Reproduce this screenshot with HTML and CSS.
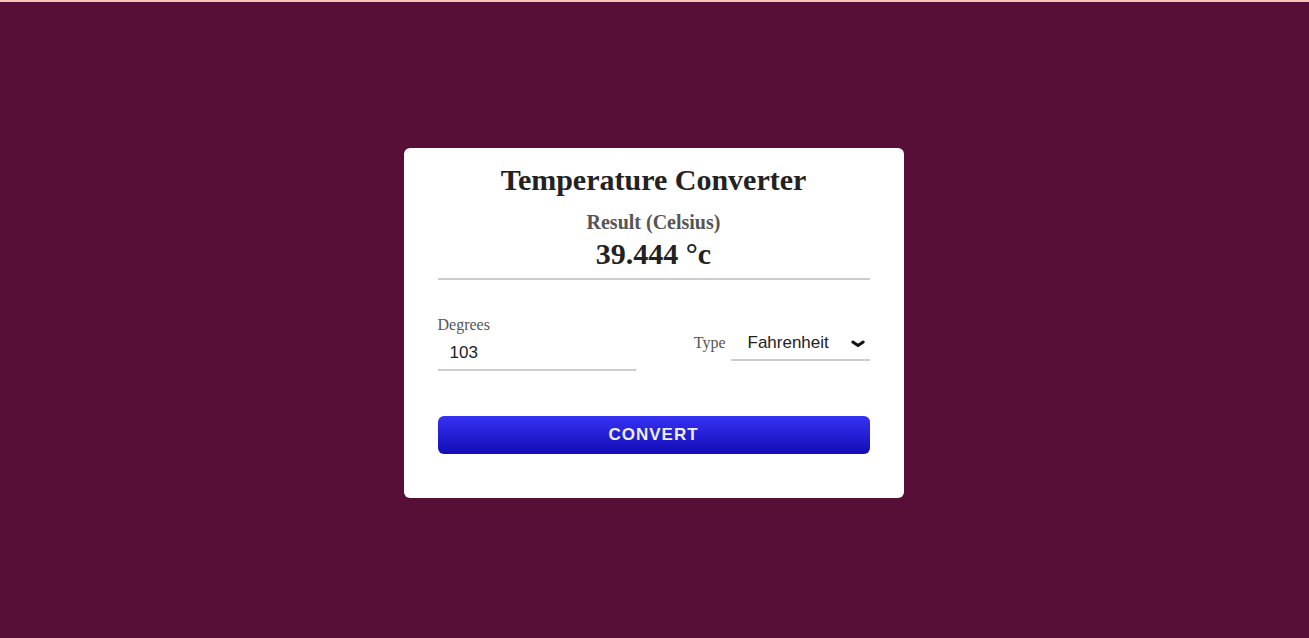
FILE: index.html
```html
<!DOCTYPE html>
<html lang="en">
<head>
  <meta charset="utf-8">
  <meta name="viewport" content="width=device-width, initial-scale=1">
  <title>Temperature Converter</title>
  <link rel="stylesheet" href="styles.css">
</head>
<body>
  <main class="page">
    <form class="card">
      <h1 class="title">Temperature Converter</h1>
      <div class="result">
        <h2 class="result-label">Result (Celsius)</h2>
        <output class="result-value" for="degrees type">39.444 °c</output>
      </div>
      <div class="fields">
        <div class="degrees-field">
          <label class="label" for="degrees">Degrees</label>
          <input class="control degrees" id="degrees" type="text" inputmode="decimal" value="103">
        </div>
        <div class="type-field">
          <label class="label" for="type">Type</label>
          <div class="select-wrap">
            <select class="control type" id="type">
              <option selected>Fahrenheit</option>
              <option>Kelvin</option>
            </select>
            <svg class="chevron" viewBox="0 0 14 8" aria-hidden="true">
              <path d="M1.8 2 L7 5.5 L12.2 2" />
            </svg>
          </div>
        </div>
      </div>
      <button class="convert" type="button">CONVERT</button>
    </form>
  </main>
</body>
</html>
```
FILE: styles.css
```css
* {
  box-sizing: border-box;
}

body {
  margin: 0;
  background: #570f37;
  color: #222;
  font-family: "Liberation Serif", "Times New Roman", serif;
}

.page {
  display: flex;
  align-items: center;
  justify-content: center;
  min-height: 100vh;
  padding: 6px 2px 0 0;
  border-top: 2px solid #f5c6b8;
}

.card {
  width: 100%;
  max-width: 500px;
  padding: 16px 34px 44px;
  border-radius: 6px;
  background: #fff;
}

.title {
  margin: 0 0 14px;
  font-size: 30px;
  line-height: 32px;
  text-align: center;
}

.result {
  padding-bottom: 8px;
  border-bottom: 2px solid #ccc;
  text-align: center;
}

.result-label {
  margin: 0 0 4px;
  color: #555;
  font-size: 20px;
  line-height: 24px;
}

.result-value {
  display: block;
  font-size: 30px;
  font-weight: bold;
  line-height: 32px;
}

.fields {
  display: flex;
  align-items: center;
  justify-content: space-between;
  margin: 35px 0 45px;
}

.degrees-field {
  width: 46%;
}

.type-field {
  display: flex;
  align-items: center;
  gap: 5px;
}

.label {
  display: block;
  color: #555;
  font-size: 16px;
  line-height: 20px;
}

.control {
  display: block;
  width: 100%;
  height: 36px;
  border: 0;
  border-bottom: 2px solid #ccc;
  border-radius: 0;
  background: transparent;
  color: #222;
  font-family: "Liberation Sans", Arial, sans-serif;
  font-size: 17px;
}

.degrees {
  padding: 2px 12px 0;
}

.select-wrap {
  position: relative;
}

.type {
  appearance: none;
  padding: 0 40px 0 17px;
}

.chevron {
  position: absolute;
  top: 15px;
  right: 5px;
  width: 14px;
  height: 8px;
  fill: none;
  stroke: #111;
  stroke-width: 3;
  stroke-linecap: round;
  stroke-linejoin: round;
  pointer-events: none;
}

.convert {
  display: block;
  width: 100%;
  height: 38px;
  padding: 0;
  border: 0;
  border-radius: 6px;
  background: linear-gradient(#3632f4, #120cb5);
  color: #eee;
  font-family: "Liberation Sans", Arial, sans-serif;
  font-size: 17px;
  font-weight: bold;
  letter-spacing: 1px;
}
```
